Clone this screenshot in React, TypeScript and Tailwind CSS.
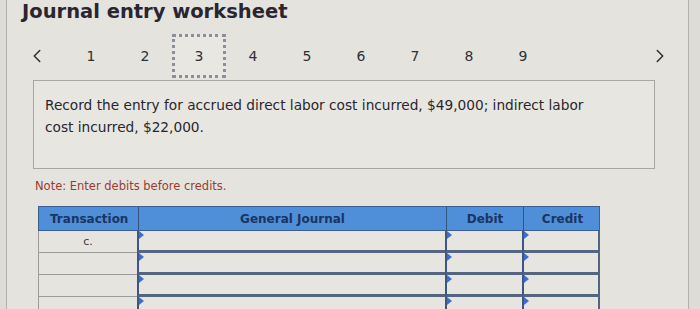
import { ChevronLeft, ChevronRight } from 'lucide-react';

const pages = [1, 2, 3, 4, 5, 6, 7, 8, 9];
const rows = ['c.', '', '', ''];

function InputCell({ className }: { className: string }) {
  return (
    <div className={`relative h-full border-l-2 border-b-[3px] border-l-[#3f5685] border-b-[#56657f] bg-[#e7e5df] ${className}`}>
      <span className="absolute left-0 top-0 h-0 w-0 border-y-[4px] border-l-[5px] border-y-transparent border-l-[#3a6ed6]" />
    </div>
  );
}

export default function App() {
  return (
    <div className="h-[309px] w-[700px] overflow-hidden bg-[#dedcd6] font-['DejaVu_Sans',sans-serif]">
      <div className="ml-[6px] h-full w-[683px] border-x border-[#b3b0aa] bg-[#e5e3dd]">
        <h1 className="ml-[15px] pt-[1px] text-[19.5px] font-bold leading-[22px] text-[#2a2530]">Journal entry worksheet</h1>

        <div className="mt-[11px] flex h-[44px] items-center">
          <ChevronLeft className="ml-[19px] h-[22px] w-[22px] text-[#2c2c34]" strokeWidth={1.6} />
          <div className="ml-[16px] flex">
            {pages.map((p) => (
              <div
                key={p}
                className={`flex h-[44px] w-[54px] items-center justify-center text-[14px] text-[#2f2f35] ${
                  p === 3 ? 'border-[3px] border-dotted border-[#8a8e9e] bg-[#e9e7e1]' : ''
                }`}
              >
                {p}
              </div>
            ))}
          </div>
          <ChevronRight className="ml-[99px] h-[22px] w-[22px] text-[#2c2c34]" strokeWidth={1.6} />
        </div>

        <div className="ml-[26px] mt-[2px] h-[89px] w-[622px] border border-[#aaa7a1] bg-[#e8e6e1] pl-[11px] pr-[60px] pt-[13px] text-[13.7px] leading-[22px] text-[#28262c]">
          Record the entry for accrued direct labor cost incurred, $49,000; indirect labor cost incurred, $22,000.
        </div>

        <p className="ml-[28px] mt-[9px] text-[11.5px] text-[#9b3b33]">Note: Enter debits before credits.</p>

        <div className="ml-[31px] mt-[11px] w-[562px]">
          <div className="grid h-[25px] grid-cols-[99px_308px_77px_78px] border border-[#3d5f90] bg-[#4f8ed8] text-[12px] font-bold text-[#1c3460]">
            <div className="flex items-center pl-[11px]">Transaction</div>
            <div className="flex items-center justify-center border-l border-[#34547f]">General Journal</div>
            <div className="flex items-center justify-center border-l border-[#34547f]">Debit</div>
            <div className="flex items-center justify-center border-l border-[#34547f]">Credit</div>
          </div>
          {rows.map((r, i) => (
            <div key={i} className="grid h-[22px] grid-cols-[99px_308px_77px_78px]">
              <div className="flex items-center justify-center border-b border-l border-[#9c9b98] bg-[#e6e4de] text-[11px] text-[#3a3a40]">
                {r}
              </div>
              <InputCell className="" />
              <InputCell className="" />
              <InputCell className="border-r-2 border-r-[#56657f]" />
            </div>
          ))}
        </div>
      </div>
    </div>
  );
}
